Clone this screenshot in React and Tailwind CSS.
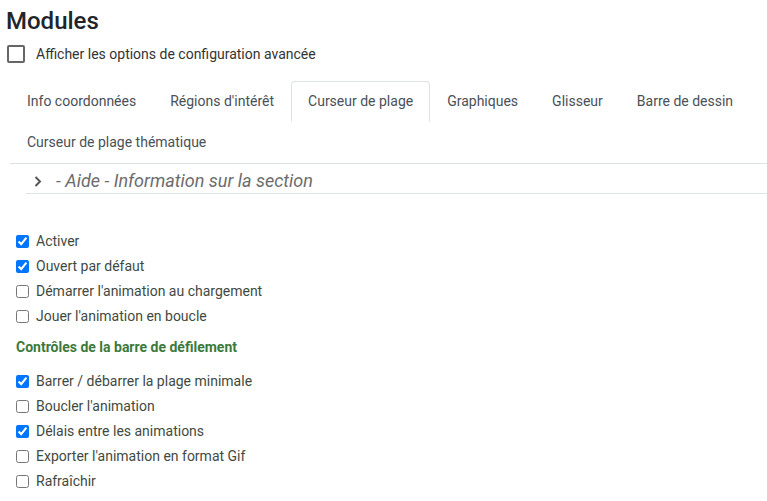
import { useState } from "react";

const tabs = [
  "Info coordonnées",
  "Régions d'intérêt",
  "Curseur de plage",
  "Graphiques",
  "Glisseur",
  "Barre de dessin",
  "Curseur de plage thématique",
];

const generalOptions = [
  { label: "Activer", checked: true },
  { label: "Ouvert par défaut", checked: true },
  { label: "Démarrer l'animation au chargement", checked: false },
  { label: "Jouer l'animation en boucle", checked: false },
];

const scrollOptions = [
  { label: "Barrer / débarrer la plage minimale", checked: true },
  { label: "Boucler l'animation", checked: false },
  { label: "Délais entre les animations", checked: true },
  { label: "Exporter l'animation en format Gif", checked: false },
  { label: "Rafraîchir", checked: false },
];

const OptionRow = ({ label, checked }) => {
  const [on, setOn] = useState(checked);
  return (
    <label className="flex h-[25px] items-center pl-[16px] text-[14px] text-[#3f4a3f]">
      <input
        type="checkbox"
        checked={on}
        onChange={() => setOn(!on)}
        className="m-0 h-[13px] w-[13px]"
      />
      <span className="ml-[7px]">{label}</span>
    </label>
  );
};

export default function App() {
  const [active, setActive] = useState(2);
  const [advanced, setAdvanced] = useState(false);

  return (
    <div className="min-h-[501px] bg-white font-['Roboto',sans-serif] text-[#212529]">
      <h2 className="pl-[6px] pt-[7px] text-[24px] font-medium leading-[29px]">
        Modules
      </h2>

      <div
        className="mt-[8px] flex h-[20px] cursor-pointer items-center pl-[7px] text-[14px] text-[#333]"
        onClick={() => setAdvanced(!advanced)}
      >
        <span
          className={`h-[18px] w-[18px] rounded-[2px] border-2 border-[#666] ${
            advanced ? "bg-[#0d6efd]" : "bg-white"
          }`}
        />
        <span className="ml-[11px]">Afficher les options de configuration avancée</span>
      </div>

      <div className="ml-[10px] mt-[17px] flex flex-wrap border-b border-[#dee2e6]">
        {tabs.map((t, i) => (
          <button
            key={t}
            onClick={() => setActive(i)}
            className={`rounded-t-[4px] border px-4 py-[9px] text-[14px] leading-[21px] text-[#495057] ${
              active === i
                ? "border-[#dee2e6] border-b-white bg-white"
                : "border-transparent"
            }`}
          >
            {t}
          </button>
        ))}
      </div>

      <div className="ml-[26px] flex h-[30px] items-start border-b border-[#dee2e6] pt-[4px]">
        <svg
          width="10"
          height="26"
          viewBox="0 0 10 26"
          className="ml-[7px] text-[#555]"
          fill="none"
          stroke="currentColor"
          strokeWidth="2"
        >
          <polyline points="2.5,9 7,13.5 2.5,18" />
        </svg>
        <span className="ml-[13px] text-[18px] italic leading-[26px] text-[#6c6c6c]">
          - Aide - Information sur la section
        </span>
      </div>

      <div className="mt-[35px]">
        {generalOptions.map((o) => (
          <OptionRow key={o.label} {...o} />
        ))}
      </div>

      <div className="mt-[6px] flex h-[25px] items-center pl-[16px] text-[14px] font-bold text-[#3b7a3b]">
        Contrôles de la barre de défilement
      </div>

      <div className="mt-[9px]">
        {scrollOptions.map((o) => (
          <OptionRow key={o.label} {...o} />
        ))}
      </div>
    </div>
  );
}
